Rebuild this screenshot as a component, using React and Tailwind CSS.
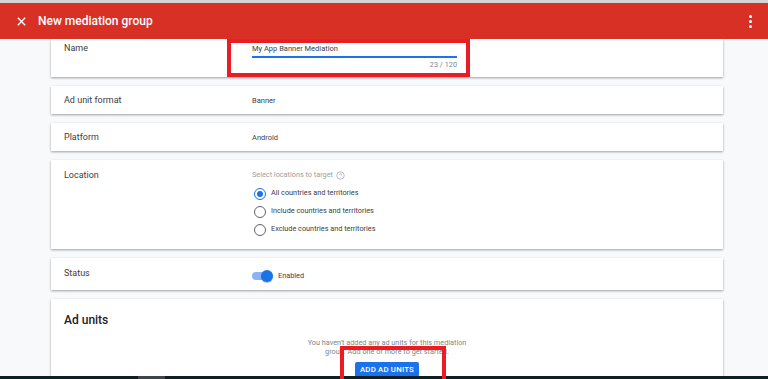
import { useState } from "react";

function Card({ label, children, className = "" }) {
  return (
    <div
      className={`flex bg-white shadow-[0_1px_2px_rgba(0,0,0,0.28),0_1px_3px_rgba(0,0,0,0.1)] ${className}`}
    >
      <div className="w-[201px] shrink-0 pl-[13px] text-[9px] text-[#3c4043]">{label}</div>
      <div className="flex-1">{children}</div>
    </div>
  );
}

function Radio({ checked, label }) {
  return (
    <div className="flex items-center gap-[5px] h-[18px]">
      <span
        className={`w-[12px] h-[12px] rounded-full border-[1.5px] flex items-center justify-center ${
          checked ? "border-[#1a73e8]" : "border-[#5f6368]"
        }`}
      >
        {checked && <span className="w-[6px] h-[6px] rounded-full bg-[#1a73e8]" />}
      </span>
      <span className="text-[7.3px] text-[#3c4043]">{label}</span>
    </div>
  );
}

export default function App() {
  const [loc, setLoc] = useState("all");

  return (
    <div
      className="relative w-[768px] h-[379px] flex flex-col overflow-hidden bg-[#f8f9fa]"
      style={{ fontFamily: "Roboto, 'Liberation Sans', sans-serif" }}
    >
      {/* HEADER */}
      <div className="h-[3px] bg-[#d4d4d4]" />
      <div className="h-[36px] shrink-0 bg-[#d93025] flex items-center px-[16px] text-white">
        <svg width="11" height="11" viewBox="0 0 24 24" fill="none" stroke="white" strokeWidth="3">
          <path d="M4 4l16 16M20 4L4 20" />
        </svg>
        <span className="ml-[11px] text-[12px] font-medium">New mediation group</span>
        <div className="ml-auto flex flex-col gap-[2px]">
          <span className="w-[3px] h-[3px] bg-white rounded-full" />
          <span className="w-[3px] h-[3px] bg-white rounded-full" />
          <span className="w-[3px] h-[3px] bg-white rounded-full" />
        </div>
      </div>

      {/* CONTENT */}
      <div className="flex-1 overflow-hidden pl-[51px]">
        <div className="w-[672px] flex flex-col gap-[9px]">
          <Card label={<div className="pt-[3px]">Name</div>} className="h-[38px]">
            <div className="pt-[4px] w-[205px]">
              <div className="text-[7.5px] text-[#3c4043]">My App Banner Mediation</div>
              <div className="mt-[2px] h-[1.5px] bg-[#1a73e8]" />
              <div className="mt-[2px] text-right text-[7.3px] text-[#80868b]">23 / 120</div>
            </div>
          </Card>

          <Card label={<div className="pt-[8px]">Ad unit format</div>} className="h-[28px]">
            <div className="pt-[9px] text-[7.5px] text-[#3c4043]">Banner</div>
          </Card>

          <Card label={<div className="pt-[8px]">Platform</div>} className="h-[28px]">
            <div className="pt-[9px] text-[7.5px] text-[#3c4043]">Android</div>
          </Card>

          <Card label={<div className="pt-[9px]">Location</div>} className="h-[89px]">
            <div className="pt-[10px]">
              <div className="flex items-center gap-[3px] text-[7.3px] text-[#9aa0a6]">
                Select locations to target
                <svg width="9" height="9" viewBox="0 0 24 24" fill="none" stroke="#9aa0a6" strokeWidth="1.8">
                  <circle cx="12" cy="12" r="10" />
                  <path d="M9.3 9a2.8 2.8 0 0 1 5.4 1c0 2-2.7 2.4-2.7 4M12 17.5v.5" />
                </svg>
              </div>
              <div className="mt-[4px] pl-[2px]">
                <div onClick={() => setLoc("all")}>
                  <Radio checked={loc === "all"} label="All countries and territories" />
                </div>
                <div onClick={() => setLoc("inc")}>
                  <Radio checked={loc === "inc"} label="Include countries and territories" />
                </div>
                <div onClick={() => setLoc("exc")}>
                  <Radio checked={loc === "exc"} label="Exclude countries and territories" />
                </div>
              </div>
            </div>
          </Card>

          <Card label={<div className="pt-[9px]">Status</div>} className="h-[32px]">
            <div className="pt-[12px] flex items-center">
              <div className="relative w-[21px] h-[12px] flex items-center">
                <div className="w-[20px] h-[8px] rounded-full bg-[#8ab4f8]" />
                <div className="absolute right-0 w-[12px] h-[12px] rounded-full bg-[#1a73e8] shadow-[0_1px_1px_rgba(0,0,0,0.3)]" />
              </div>
              <span className="ml-[5px] text-[7.3px] text-[#3c4043]">Enabled</span>
            </div>
          </Card>

          {/* AD UNITS */}
          <div className="bg-white h-[80px] shadow-[0_1px_2px_rgba(0,0,0,0.28),0_1px_3px_rgba(0,0,0,0.1)] pl-[13px] pt-[12px]">
            <div className="text-[12px] font-medium text-[#202124]">Ad units</div>
            <div className="mt-[9px] flex flex-col items-center pr-[13px]">
              <div className="w-[170px] text-center text-[7.3px] leading-[9px] text-[#80868b]">
                You haven't added any ad units for this mediation group. Add one or more to get started.
              </div>
              <button className="mt-[6px] h-[15px] px-[5px] bg-[#1a73e8] text-white text-[7.8px] font-medium rounded-[2px] tracking-[0.2px]">
                ADD AD UNITS
              </button>
            </div>
          </div>
        </div>
      </div>

      {/* BOTTOM STRIP */}
      <div className="absolute left-0 right-0 bottom-0 h-[3px] bg-[#0f1f26] flex">
        <div className="ml-[138px] w-[27px] bg-[#3a464c]" />
      </div>

      {/* HIGHLIGHT BOXES */}
      <div className="absolute left-[227px] top-[39px] w-[243px] h-[38px] border-[4px] border-[#ec1c24]" />
      <div className="absolute left-[340px] top-[346px] w-[106px] h-[40px] border-[4px] border-[#ec1c24]" />
    </div>
  );
}
